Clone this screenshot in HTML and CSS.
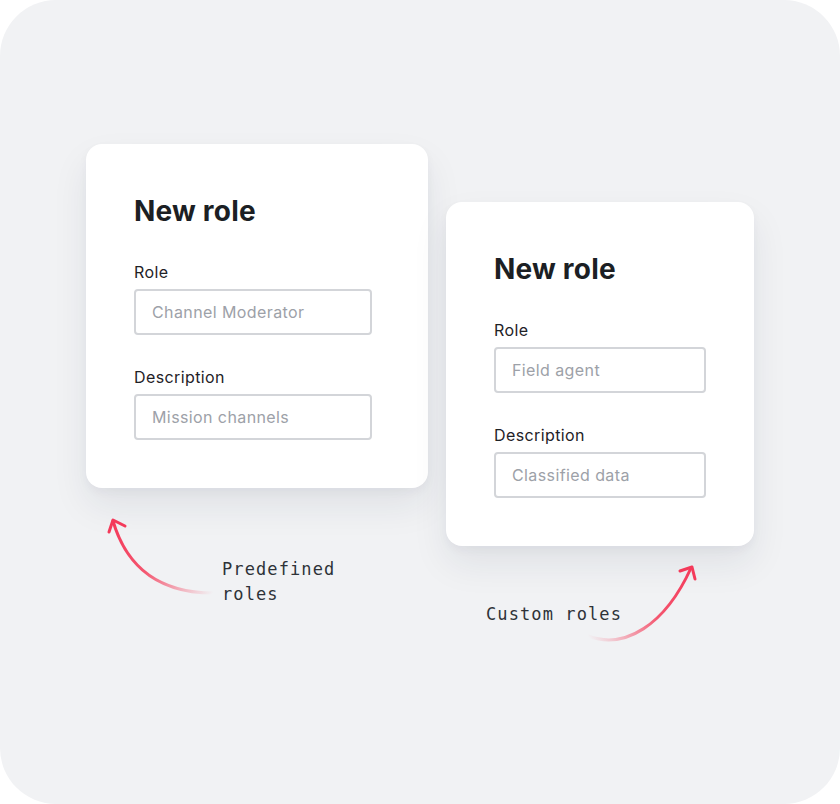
FILE: index.html
```html
<!DOCTYPE html>
<html lang="en">
<head>
<meta charset="utf-8">
<title>New role</title>
<link rel="stylesheet" href="styles.css">
</head>
<body>
<div class="canvas">
  <div class="card card-a">
    <h2 class="title">New role</h2>
    <div class="field">
      <label class="label">Role</label>
      <div class="input">Channel Moderator</div>
    </div>
    <div class="field">
      <label class="label">Description</label>
      <div class="input">Mission channels</div>
    </div>
  </div>
  <div class="card card-b">
    <h2 class="title">New role</h2>
    <div class="field">
      <label class="label">Role</label>
      <div class="input">Field agent</div>
    </div>
    <div class="field">
      <label class="label">Description</label>
      <div class="input">Classified data</div>
    </div>
  </div>

  <svg class="arrows" width="840" height="804" viewBox="0 0 840 804" aria-hidden="true">
    <defs>
      <linearGradient id="gA" gradientUnits="userSpaceOnUse" x1="113" y1="521" x2="213" y2="593">
        <stop offset="0" stop-color="#f43a5a"/>
        <stop offset="0.45" stop-color="#f4566f"/>
        <stop offset="1" stop-color="#f4566f" stop-opacity="0"/>
      </linearGradient>
      <linearGradient id="gB" gradientUnits="userSpaceOnUse" x1="691" y1="568" x2="588" y2="636">
        <stop offset="0" stop-color="#f43a5a"/>
        <stop offset="0.45" stop-color="#f4566f"/>
        <stop offset="1" stop-color="#f4566f" stop-opacity="0"/>
      </linearGradient>
    </defs>
    <path d="M113 521 C 123 555 148 593 213 593" fill="none" stroke="url(#gA)" stroke-width="3" stroke-linecap="round"/>
    <path d="M125 526 L113 520 L109 532" fill="none" stroke="#f43a5a" stroke-width="3" stroke-linecap="round" stroke-linejoin="round"/>
    <path d="M588 636 C 625 650 665 625 691 568" fill="none" stroke="url(#gB)" stroke-width="3" stroke-linecap="round"/>
    <path d="M680 571 L692 567 L695 579" fill="none" stroke="#f43a5a" stroke-width="3" stroke-linecap="round" stroke-linejoin="round"/>
  </svg>

  <div class="note note-a">Predefined<br>roles</div>
  <div class="note note-b">Custom roles</div>
</div>
</body>
</html>
```
FILE: styles.css
```css
html, body {
  margin: 0;
  padding: 0;
  background: #ffffff;
}

.canvas {
  position: relative;
  width: 840px;
  height: 804px;
  box-sizing: border-box;
  border-radius: 56px;
  background: #f1f2f4;
  display: flex;
  align-items: flex-start;
  gap: 18px;
  padding: 144px 0 0 86px;
  font-family: Inter, "Noto Sans", sans-serif;
}

.card {
  background: #ffffff;
  border-radius: 16px;
  box-sizing: border-box;
  padding: 50px 48px 48px 48px;
  display: flex;
  flex-direction: column;
  box-shadow: 0 18px 36px rgba(28, 36, 64, 0.08), 0 4px 10px rgba(28, 36, 64, 0.04);
}

.card-a {
  width: 342px;
}

.card-b {
  width: 308px;
  margin-top: 58px;
}

.card-a .input {
  width: 238px;
}

.card-b .input {
  width: 212px;
}

.title {
  margin: 0 0 35px 0;
  font-size: 28px;
  line-height: 34px;
  font-weight: 700;
  color: #1c1f24;
  letter-spacing: 0.2px;
}

.field {
  display: flex;
  flex-direction: column;
  gap: 7px;
}

.field + .field {
  margin-top: 33px;
}

.label {
  font-size: 16px;
  line-height: 19px;
  font-weight: 400;
  color: #1f2227;
  letter-spacing: 0.4px;
}

.input {
  box-sizing: border-box;
  height: 46px;
  border: 2px solid #d3d5d9;
  border-radius: 4px;
  padding: 0 16px;
  display: flex;
  align-items: center;
  font-size: 16px;
  letter-spacing: 0.4px;
  color: #9da1a8;
}

.arrows {
  position: absolute;
  left: 0;
  top: 0;
  pointer-events: none;
}

.note {
  position: absolute;
  font-family: "DejaVu Sans Mono", "Liberation Mono", monospace;
  font-size: 17px;
  line-height: 25px;
  letter-spacing: 1.1px;
  color: #2e3238;
}

.note-a {
  left: 222px;
  top: 557px;
}

.note-b {
  left: 486px;
  top: 602px;
}
```
